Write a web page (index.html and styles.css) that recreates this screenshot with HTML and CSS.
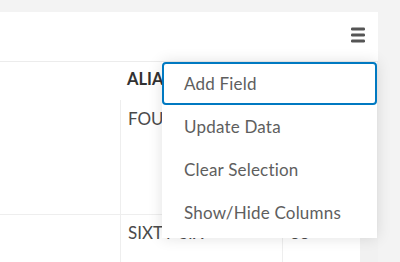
FILE: index.html
```html
<!DOCTYPE html>
<html lang="en">
<head>
<meta charset="utf-8">
<title>Feature table</title>
<link rel="stylesheet" href="styles.css">
</head>
<body>
<div class="panel">
  <div class="toolbar">
    <button class="menu-btn" aria-label="Menu">
      <svg width="14" height="16" viewBox="0 0 14 16">
        <rect x="0" y="0.5" width="14" height="3" rx="1.2" fill="#555"/>
        <rect x="0" y="6.5" width="14" height="3" rx="1.2" fill="#555"/>
        <rect x="0" y="12.5" width="14" height="3" rx="1.2" fill="#555"/>
      </svg>
    </button>
  </div>
  <div class="table-area">
    <div class="grid">
      <div class="th"></div>
      <div class="th">ALIAS</div>
      <div class="th">COUNT</div>
      <div class="td first"></div>
      <div class="td">FOUR</div>
      <div class="td">12</div>
      <div class="td first row2"></div>
      <div class="td row2">SIXTY-SIX</div>
      <div class="td row2">33</div>
    </div>
    <div class="track"></div>
  </div>
  <ul class="menu">
    <li class="item focused">Add Field</li>
    <li class="item">Update Data</li>
    <li class="item">Clear Selection</li>
    <li class="item">Show/Hide Columns</li>
  </ul>
</div>
</body>
</html>
```

FILE: styles.css
```css
html, body {
  margin: 0;
  padding: 0;
}
body {
  background: #f3f3f3;
  font-family: "Lato", "Avenir Next", sans-serif;
  width: 400px;
  height: 262px;
  overflow: hidden;
}
.panel {
  position: relative;
  margin-top: 12px;
  width: 378px;
  height: 250px;
  background: #fff;
}
.toolbar {
  height: 49px;
  border-bottom: 1px solid #ececec;
  display: flex;
  justify-content: flex-end;
  align-items: flex-start;
}
.menu-btn {
  border: 0;
  background: none;
  padding: 0;
  margin: 15px 13px 0 0;
  width: 14px;
  height: 16px;
  display: block;
}
.menu-btn svg {
  display: block;
}
.table-area {
  display: flex;
  height: 200px;
}
.grid {
  display: grid;
  grid-template-columns: 120px 162px 78px;
  grid-template-rows: 38px 114px 1fr;
  width: 360px;
}
.track {
  width: 18px;
  background: #f1f1f1;
}
.th {
  font-size: 16.5px;
  font-weight: 700;
  color: #323232;
  padding: 7px 0 0 7px;
  white-space: nowrap;
  overflow: hidden;
}
.td {
  font-size: 17px;
  color: #4a4a4a;
  padding: 8px 0 0 7px;
  border-left: 1px solid #eeeeee;
  white-space: nowrap;
  overflow: hidden;
  text-overflow: ellipsis;
}
.td.first {
  border-left: 0;
}
.td.row2 {
  border-top: 1px solid #eeeeee;
  padding-top: 7px;
}
.menu {
  position: absolute;
  left: 162px;
  top: 50px;
  width: 215px;
  margin: 0;
  padding: 0 0 4px;
  list-style: none;
  background: #fff;
  box-shadow: 0 0 14px rgba(0, 0, 0, 0.12);
}
.item {
  height: 43px;
  box-sizing: border-box;
  padding-left: 22px;
  display: flex;
  align-items: center;
  font-size: 17px;
  letter-spacing: 0.2px;
  color: #5e5e5e;
  white-space: nowrap;
}
.item.focused {
  border: 2px solid #0079c1;
  border-radius: 4px;
  padding-left: 20px;
}
```
